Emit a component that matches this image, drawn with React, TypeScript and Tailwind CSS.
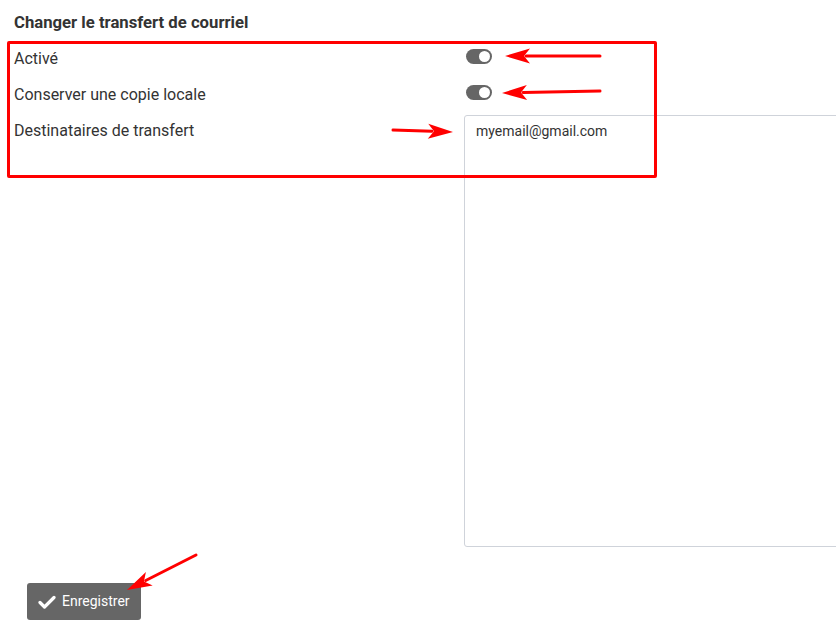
import React from "react";

function Toggle() {
  return (
    <span className="relative mt-[8px] inline-block h-[15px] w-[26px] shrink-0 self-start rounded-full bg-[#666666]">
      <span className="absolute right-[2px] top-[2px] h-[11px] w-[11px] rounded-full bg-white" />
    </span>
  );
}

function Arrow({ x1, y1, x2, y2 }: { x1: number; y1: number; x2: number; y2: number }) {
  // head at (x2, y2)
  const dx = x2 - x1;
  const dy = y2 - y1;
  const len = Math.hypot(dx, dy);
  const ux = dx / len;
  const uy = dy / len;
  const hl = 25;
  const hw = 7.5;
  const bx = x2 - ux * hl;
  const by = y2 - uy * hl;
  const pts = `${x2},${y2} ${bx - uy * hw},${by + ux * hw} ${bx + ux * 6},${by + uy * 6} ${bx + uy * hw},${by - ux * hw}`;
  return (
    <g>
      <line x1={x1} y1={y1} x2={bx + ux * 4} y2={by + uy * 4} stroke="#ff0000" strokeWidth={3} strokeLinecap="round" />
      <polygon points={pts} fill="#ff0000" />
    </g>
  );
}

export default function App() {
  return (
    <div className="relative h-[640px] w-[836px] overflow-hidden bg-white font-['Roboto',sans-serif] text-[#333333]">
      <div className="pl-[14px] pt-[13px]">
        <h2 className="text-[16.7px] font-bold leading-[20px] text-[#333333]">Changer le transfert de courriel</h2>

        <div className="mt-[8px] flex flex-col">
          <div className="flex h-[36px] items-center">
            <span className="w-[452px] shrink-0 text-[16px]">Activé</span>
            <Toggle />
          </div>
          <div className="flex h-[36px] items-center">
            <span className="w-[452px] shrink-0 text-[16px]">Conserver une copie locale</span>
            <Toggle />
          </div>
          <div className="flex">
            <span className="mt-[6px] w-[450px] shrink-0 text-[16px] leading-[24px]">Destinataires de transfert</span>
            <div className="mt-[2px] h-[432px] w-[400px] shrink-0 rounded-l-[3px] border border-[#cfd3da] px-[11px] pt-[5px] text-[14px] leading-[20px] text-[#333333]">
              myemail@gmail.com
            </div>
          </div>
        </div>

        <button className="ml-[13px] mt-[36px] flex h-[37px] items-center gap-[6px] rounded-[3px] bg-[#666666] pl-[11px] pr-[11px] text-[14px] text-white">
          <svg width="18" height="14" viewBox="0 0 18 14">
            <path d="M2 7.5 L6.5 12 L16 2.5" fill="none" stroke="white" strokeWidth="3.2" strokeLinecap="round" strokeLinejoin="round" />
          </svg>
          Enregistrer
        </button>
      </div>

      {/* annotations */}
      <div className="absolute left-[7px] top-[41px] h-[137px] w-[650px] rounded-[2px] border-[3px] border-[#ff0000]" />
      <svg className="absolute inset-0" width="836" height="640">
        <Arrow x1={600} y1={56} x2={505} y2={56} />
        <Arrow x1={600} y1={91} x2={502} y2={93} />
        <Arrow x1={393} y1={130} x2={453} y2={132} />
        <Arrow x1={196} y1={555} x2={127} y2={590} />
      </svg>
    </div>
  );
}
